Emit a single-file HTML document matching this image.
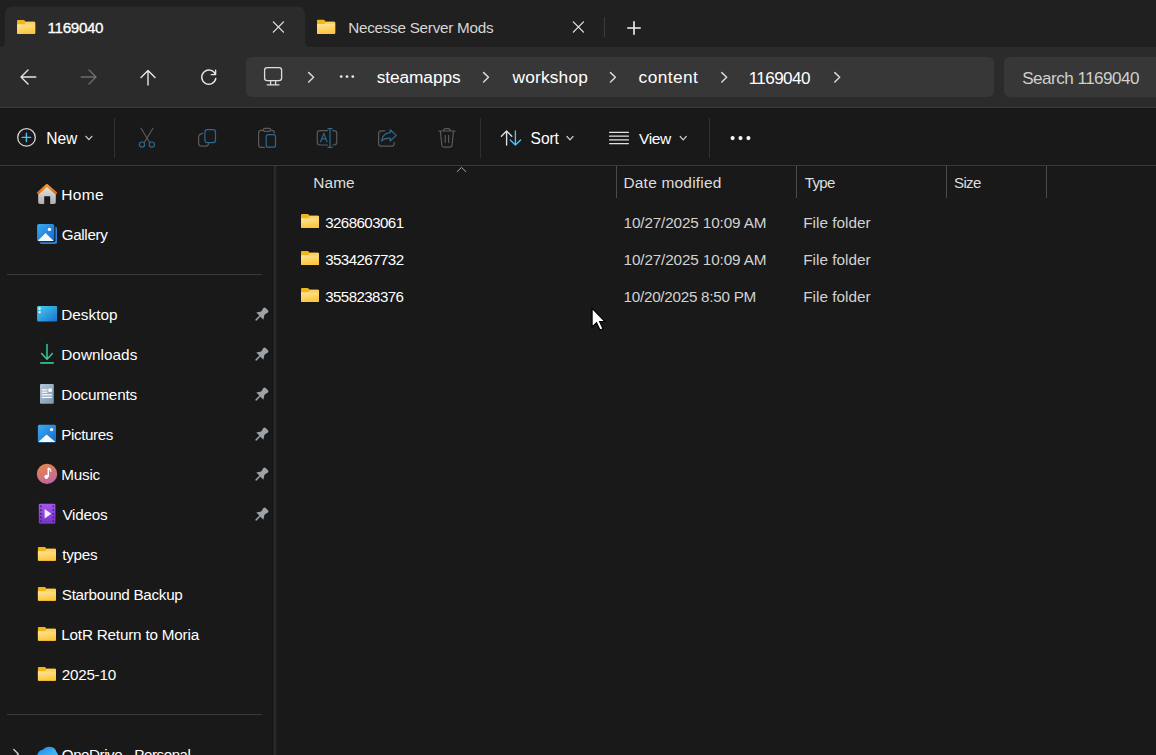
<!DOCTYPE html><html><head><meta charset="utf-8"><style>
html,body{margin:0;padding:0;width:1156px;height:755px;overflow:hidden;background:#191919}
body{position:relative;font-family:"Liberation Sans",sans-serif}
.t{position:absolute;white-space:nowrap;line-height:1}
svg{overflow:visible}
</style></head><body>
<div style="position:absolute;left:0;top:0;width:1156px;height:47px;background:#202020"></div>
<div style="position:absolute;left:0;top:47px;width:1156px;height:60px;background:#2b2b2b"></div>
<div style="position:absolute;left:0;top:107px;width:1156px;height:1px;background:#3b3b3b"></div>
<div style="position:absolute;left:0;top:108px;width:1156px;height:647px;background:#191919"></div>
<div style="position:absolute;left:0;top:108px;width:1156px;height:1px;background:#161616"></div>
<div style="position:absolute;left:0;top:164px;width:1156px;height:1px;background:#161616"></div>
<div style="position:absolute;left:0;top:165px;width:1156px;height:1px;background:#3b3b3b"></div>
<div style="position:absolute;left:0;top:166px;width:1156px;height:1px;background:#161616"></div>
<svg style="position:absolute;left:0;top:0" width="320" height="47" viewBox="0 0 320 47">
<path d="M0 47 Q5 47 5 42 L5 14.6 Q5 6.6 13 6.6 L297 6.6 Q305 6.6 305 14.6 L305 42 Q305 47 310 47 Z" fill="#2b2b2b"/></svg>
<div style="position:absolute;left:246px;top:57px;width:748px;height:40px;border-radius:6px;background:#373737"></div>
<div style="position:absolute;left:1004px;top:57px;width:200px;height:40px;border-radius:6px 6px 7px 7px;background:#373737;border-bottom:1px solid #313131"></div>
<div style="position:absolute;left:272px;top:166px;width:6px;height:589px;background:linear-gradient(90deg,#141414 0,#141414 1px,#1f1f1f 1px,#1f1f1f 2px,#2c2c2c 2px,#2c2c2c 3px,#252525 3px,#252525 4px,#1f1f1f 4px,#1f1f1f 5px,#1b1b1b 5px)"></div>
<div style="position:absolute;left:7px;top:274px;width:255px;height:1px;background:#3a3a3a"></div>
<div style="position:absolute;left:7px;top:714px;width:255px;height:1px;background:#3a3a3a"></div>
<div class="t" style="left:47.56px;top:20px;font-size:15.20px;letter-spacing:-0.332px;color:#ffffff;-webkit-text-stroke:0.3px #ffffff;">1169040</div>
<div class="t" style="left:348.18px;top:20px;font-size:15.25px;letter-spacing:-0.257px;color:#d6d6d6;">Necesse Server Mods</div>
<div class="t" style="left:376.68px;top:69px;font-size:17.30px;letter-spacing:-0.072px;color:#ffffff;">steamapps</div>
<div class="t" style="left:512.50px;top:69px;font-size:17.30px;letter-spacing:0.193px;color:#ffffff;">workshop</div>
<div class="t" style="left:638.61px;top:69px;font-size:17.30px;letter-spacing:0.422px;color:#ffffff;">content</div>
<div class="t" style="left:748.72px;top:70px;font-size:17.10px;letter-spacing:-0.590px;color:#ffffff;">1169040</div>
<div class="t" style="left:1022.23px;top:70px;font-size:17.10px;letter-spacing:-0.528px;color:#cfcfcf;">Search 1169040</div>
<div class="t" style="left:46.35px;top:131px;font-size:15.60px;letter-spacing:-0.115px;color:#ffffff;">New</div>
<div class="t" style="left:530.60px;top:131px;font-size:15.60px;letter-spacing:-0.089px;color:#ffffff;">Sort</div>
<div class="t" style="left:639.12px;top:131px;font-size:15.50px;letter-spacing:-0.449px;color:#ffffff;">View</div>
<div class="t" style="left:313.27px;top:175px;font-size:15.40px;letter-spacing:0.095px;color:#dedede;">Name</div>
<div class="t" style="left:623.46px;top:175px;font-size:15.45px;letter-spacing:0.218px;color:#dedede;">Date modified</div>
<div class="t" style="left:804.70px;top:175px;font-size:15.10px;letter-spacing:-0.670px;color:#dedede;">Type</div>
<div class="t" style="left:954.02px;top:175px;font-size:15.10px;letter-spacing:-0.670px;color:#dedede;">Size</div>
<div class="t" style="left:325.20px;top:215px;font-size:15.10px;letter-spacing:-0.564px;color:#ffffff;">3268603061</div>
<div class="t" style="left:623.55px;top:215px;font-size:15.30px;letter-spacing:-0.142px;color:#d2d2d2;">10/27/2025 10:09 AM</div>
<div class="t" style="left:803.17px;top:215px;font-size:15.35px;letter-spacing:0.017px;color:#d2d2d2;">File folder</div>
<div class="t" style="left:325.19px;top:252px;font-size:15.15px;letter-spacing:-0.586px;color:#ffffff;">3534267732</div>
<div class="t" style="left:623.55px;top:252px;font-size:15.30px;letter-spacing:-0.142px;color:#d2d2d2;">10/27/2025 10:09 AM</div>
<div class="t" style="left:803.17px;top:252px;font-size:15.35px;letter-spacing:0.017px;color:#d2d2d2;">File folder</div>
<div class="t" style="left:325.20px;top:289px;font-size:15.10px;letter-spacing:-0.572px;color:#ffffff;">3558238376</div>
<div class="t" style="left:623.56px;top:289px;font-size:15.25px;letter-spacing:-0.274px;color:#d2d2d2;">10/20/2025 8:50 PM</div>
<div class="t" style="left:803.17px;top:289px;font-size:15.35px;letter-spacing:0.017px;color:#d2d2d2;">File folder</div>
<div class="t" style="left:61.26px;top:187px;font-size:15.50px;letter-spacing:0.377px;color:#ffffff;">Home</div>
<div class="t" style="left:61.74px;top:227px;font-size:15.20px;letter-spacing:-0.337px;color:#ffffff;">Gallery</div>
<div class="t" style="left:61.27px;top:307px;font-size:15.35px;letter-spacing:-0.019px;color:#ffffff;">Desktop</div>
<div class="t" style="left:61.27px;top:347px;font-size:15.35px;letter-spacing:0.020px;color:#ffffff;">Downloads</div>
<div class="t" style="left:61.28px;top:387px;font-size:15.30px;letter-spacing:-0.170px;color:#ffffff;">Documents</div>
<div class="t" style="left:61.29px;top:427px;font-size:15.15px;letter-spacing:-0.364px;color:#ffffff;">Pictures</div>
<div class="t" style="left:61.28px;top:467px;font-size:15.25px;letter-spacing:-0.225px;color:#ffffff;">Music</div>
<div class="t" style="left:62.42px;top:507px;font-size:15.25px;letter-spacing:-0.230px;color:#ffffff;">Videos</div>
<div class="t" style="left:62.27px;top:547px;font-size:15.25px;letter-spacing:-0.271px;color:#ffffff;">types</div>
<div class="t" style="left:61.81px;top:587px;font-size:15.25px;letter-spacing:-0.296px;color:#ffffff;">Starbound Backup</div>
<div class="t" style="left:61.28px;top:627px;font-size:15.25px;letter-spacing:-0.195px;color:#ffffff;">LotR Return to Moria</div>
<div class="t" style="left:61.74px;top:667px;font-size:15.25px;letter-spacing:-0.262px;color:#ffffff;">2025-10</div>
<div class="t" style="left:61.82px;top:747px;font-size:15.15px;letter-spacing:-0.445px;color:#ffffff;">OneDrive - Personal</div>
<svg style="position:absolute;left:0;top:0" width="1156" height="755" viewBox="0 0 1156 755"><defs>
<linearGradient id="fg" x1="0" y1="0" x2="0.3" y2="1"><stop offset="0" stop-color="#ffe699"/><stop offset="1" stop-color="#fcc63e"/></linearGradient>
<linearGradient id="roof" x1="0" y1="0" x2="0" y2="1"><stop offset="0" stop-color="#f59a2a"/><stop offset="1" stop-color="#de6a0c"/></linearGradient>
<linearGradient id="house" x1="0" y1="0" x2="0" y2="1"><stop offset="0" stop-color="#e6e6e6"/><stop offset="1" stop-color="#aeaeae"/></linearGradient>
<linearGradient id="gal" x1="0" y1="0" x2="1" y2="1"><stop offset="0" stop-color="#3eaaf2"/><stop offset="1" stop-color="#136bd0"/></linearGradient>
<linearGradient id="desk" x1="0" y1="0" x2="1" y2="1"><stop offset="0" stop-color="#4ad0ea"/><stop offset="1" stop-color="#1670d4"/></linearGradient>
<linearGradient id="doc" x1="0" y1="0" x2="1" y2="1"><stop offset="0" stop-color="#b4c6d8"/><stop offset="1" stop-color="#7d96ae"/></linearGradient>
<linearGradient id="mus" x1="0" y1="0" x2="0.4" y2="1"><stop offset="0" stop-color="#ec8a3e"/><stop offset="1" stop-color="#c2679e"/></linearGradient>
<linearGradient id="vid" x1="0" y1="0" x2="0" y2="1"><stop offset="0" stop-color="#a458ec"/><stop offset="1" stop-color="#7434c6"/></linearGradient>
<linearGradient id="od" x1="0" y1="0" x2="1" y2="1"><stop offset="0" stop-color="#1f7fe0"/><stop offset="0.5" stop-color="#38a8f2"/><stop offset="1" stop-color="#52c0f4"/></linearGradient>
</defs><path d="M17.0,20.91428571428571 Q17.0,19.9 18.011111111111113,19.9 L23.673333333333332,19.9 Q24.28,19.9 24.684444444444445,20.407142857142855 L25.695555555555554,21.725714285714282 L34.18888888888889,21.725714285714282 Q35.2,21.725714285714282 35.2,22.74 L35.2,33.08571428571428 Q35.2,34.099999999999994 34.18888888888889,34.099999999999994 L18.011111111111113,34.099999999999994 Q17.0,34.099999999999994 17.0,33.08571428571428 Z" fill="#f1b51c"/><path d="M25.695555555555554,21.725714285714282 L34.18888888888889,21.725714285714282 Q35.2,21.725714285714282 35.2,22.74 L35.2,24.159999999999997 L24.482222222222223,24.159999999999997 Z" fill="#fbd166"/><path d="M17.0,24.159999999999997 L35.2,24.159999999999997 L35.2,33.08571428571428 Q35.2,34.099999999999994 34.18888888888889,34.099999999999994 L18.011111111111113,34.099999999999994 Q17.0,34.099999999999994 17.0,33.08571428571428 Z" fill="url(#fg)"/><path d="M317.0,20.821428571428573 Q317.0,19.8 318.0111111111111,19.8 L323.67333333333335,19.8 Q324.28,19.8 324.68444444444447,20.310714285714287 L325.69555555555553,21.63857142857143 L334.18888888888887,21.63857142857143 Q335.2,21.63857142857143 335.2,22.66 L335.2,33.07857142857143 Q335.2,34.1 334.18888888888887,34.1 L318.0111111111111,34.1 Q317.0,34.1 317.0,33.07857142857143 Z" fill="#f1b51c"/><path d="M325.69555555555553,21.63857142857143 L334.18888888888887,21.63857142857143 Q335.2,21.63857142857143 335.2,22.66 L335.2,24.090000000000003 L324.4822222222222,24.090000000000003 Z" fill="#fbd166"/><path d="M317.0,24.090000000000003 L335.2,24.090000000000003 L335.2,33.07857142857143 Q335.2,34.1 334.18888888888887,34.1 L318.0111111111111,34.1 Q317.0,34.1 317.0,33.07857142857143 Z" fill="url(#fg)"/><path d="M273.29999999999995,21.9 L283.5,32.1 M283.5,21.9 L273.29999999999995,32.1" stroke="#e4e4e4" stroke-width="1.3" stroke-linecap="round"/><path d="M573.3,21.9 L583.5,32.1 M583.5,21.9 L573.3,32.1" stroke="#e4e4e4" stroke-width="1.3" stroke-linecap="round"/><rect x="604" y="17" width="1" height="20" fill="#3b3b3b"/><path d="M634,21.8 V34.2 M627.8,28 H640.2" stroke="#f2f2f2" stroke-width="1.6" stroke-linecap="round"/><path d="M21,77 H35.8 M28,70 L21,77 L28,84" fill="none" stroke="#e6e6e6" stroke-width="1.4" stroke-linecap="round" stroke-linejoin="round"/><path d="M96,77 H81.2 M89,70 L96,77 L89,84" fill="none" stroke="#6e6e6e" stroke-width="1.4" stroke-linecap="round" stroke-linejoin="round"/><path d="M148,85 V70.6 M141,77.6 L148,70.6 L155,77.6" fill="none" stroke="#e6e6e6" stroke-width="1.4" stroke-linecap="round" stroke-linejoin="round"/><path d="M215.3,74.2 A7.1,7.1 0 1 0 215.8,78.5" fill="none" stroke="#e6e6e6" stroke-width="1.4" stroke-linecap="round"/><path d="M215.6,70.2 V74.6 H211.2" fill="none" stroke="#e6e6e6" stroke-width="1.4" stroke-linecap="round" stroke-linejoin="round"/><rect x="264.6" y="67.6" width="17" height="13" rx="2.6" fill="none" stroke="#dedede" stroke-width="1.3"/><path d="M270.6,80.8 V84.6 M275.6,80.8 V84.6 M267.2,84.8 H279" stroke="#dedede" stroke-width="1.3" stroke-linecap="round"/><path d="M308.7,72.6 L313.59999999999997,77.3 L308.7,82.0" fill="none" stroke="#d8d8d8" stroke-width="1.5" stroke-linecap="round" stroke-linejoin="round"/><path d="M483.6,72.6 L488.5,77.3 L483.6,82.0" fill="none" stroke="#d8d8d8" stroke-width="1.5" stroke-linecap="round" stroke-linejoin="round"/><path d="M610.5,72.6 L615.4000000000001,77.3 L610.5,82.0" fill="none" stroke="#d8d8d8" stroke-width="1.5" stroke-linecap="round" stroke-linejoin="round"/><path d="M721.8,72.6 L726.7,77.3 L721.8,82.0" fill="none" stroke="#d8d8d8" stroke-width="1.5" stroke-linecap="round" stroke-linejoin="round"/><path d="M834.8,72.6 L839.7,77.3 L834.8,82.0" fill="none" stroke="#d8d8d8" stroke-width="1.5" stroke-linecap="round" stroke-linejoin="round"/><circle cx="341.2" cy="76.6" r="1.4" fill="#e4e4e4"/><circle cx="347" cy="76.6" r="1.4" fill="#e4e4e4"/><circle cx="352.8" cy="76.6" r="1.4" fill="#e4e4e4"/><circle cx="26.5" cy="137.4" r="8.8" fill="none" stroke="#d6d6d6" stroke-width="1.3"/><path d="M26.4,133.2 V141.6 M22.2,137.4 H30.6" stroke="#4cc2ff" stroke-width="1.4" stroke-linecap="round"/><path d="M85.9,136.3 L88.9,139.70000000000002 L91.9,136.3" fill="none" stroke="#cfcfcf" stroke-width="1.2" stroke-linecap="round" stroke-linejoin="round"/><rect x="114" y="118" width="1" height="40" fill="#303030"/><rect x="480" y="118" width="1" height="40" fill="#303030"/><rect x="709" y="118" width="1" height="40" fill="#303030"/><path d="M141,128.3 L149.4,142 M153,128.3 L144.5,142" stroke="#5a5a5a" stroke-width="1.2" stroke-linecap="round"/><circle cx="142" cy="144.6" r="2.6" fill="none" stroke="#2c6890" stroke-width="1.2"/><circle cx="151.9" cy="144.6" r="2.6" fill="none" stroke="#2c6890" stroke-width="1.2"/><rect x="204.9" y="129.6" width="10.6" height="13" rx="2.4" fill="none" stroke="#2c6890" stroke-width="1.2"/><path d="M202.8,133.3 Q198.6,133.8 198.6,137.8 V143.2 Q198.6,146.2 201.6,146.2 H205.6 Q208.2,146.2 208.7,143.6" fill="none" stroke="#5a5a5a" stroke-width="1.2" stroke-linecap="round"/><path d="M263,130.3 H261 Q258.6,130.3 258.6,132.7 V145 Q258.6,147.3 261,147.3 H264.6" fill="none" stroke="#5a5a5a" stroke-width="1.2" stroke-linecap="round"/><path d="M271.6,130.3 Q274.4,130.3 274.4,133" fill="none" stroke="#5a5a5a" stroke-width="1.2" stroke-linecap="round"/><rect x="263.4" y="128.4" width="7.2" height="3" rx="1.4" fill="none" stroke="#5a5a5a" stroke-width="1.2"/><rect x="266.2" y="134.6" width="9.3" height="12.6" rx="2" fill="none" stroke="#2c6890" stroke-width="1.2"/><path d="M327.6,130.6 H320 Q317.3,130.6 317.3,133.3 V142.3 Q317.3,145 320,145 H327.6 M332.6,130.6 H334 Q336.7,130.6 336.7,133.3 V142.3 Q336.7,145 334,145 H332.6" fill="none" stroke="#5a5a5a" stroke-width="1.2" stroke-linecap="round"/><path d="M320.6,141.8 L323.8,133.4 L327,141.8 M321.8,138.8 H325.8" fill="none" stroke="#2c6890" stroke-width="1.2" stroke-linecap="round" stroke-linejoin="round"/><path d="M330,128.6 V147.4 M328,128.6 H332 M328,147.4 H332" stroke="#2c6890" stroke-width="1.2" stroke-linecap="round"/><path d="M384.8,130.8 H381.4 Q378.6,130.8 378.6,133.6 V143.4 Q378.6,146.2 381.4,146.2 H391.4 Q394.2,146.2 394.2,143.4 V142.4" fill="none" stroke="#5a5a5a" stroke-width="1.2" stroke-linecap="round"/><path d="M390.2,129.8 L396.2,135.4 L390.2,141 V138.1 Q384.2,137.9 381.6,141.2 Q382.4,133.4 390.2,132.7 Z" fill="none" stroke="#2c6890" stroke-width="1.25" stroke-linejoin="round"/><path d="M438.6,131 H455.2 M443.6,131 Q443.6,128.6 446,128.6 H448 Q450.3,128.6 450.3,131 M440.4,131.4 L441.8,145 Q442,147.2 444.3,147.2 H449.6 Q451.9,147.2 452.1,145 L453.4,131.4 M445.2,135.4 V142.4 M448.6,135.4 V142.4" fill="none" stroke="#5a5a5a" stroke-width="1.2" stroke-linecap="round" stroke-linejoin="round"/><path d="M506.6,145 V131 M501.4,136.2 L506.6,131 L511.8,136.2" fill="none" stroke="#e2e2e2" stroke-width="1.35" stroke-linecap="round" stroke-linejoin="round"/><path d="M515.4,131 V145.1 M510.2,139.9 L515.4,145.1 L520.6,139.9" fill="none" stroke="#4cc2ff" stroke-width="1.35" stroke-linecap="round" stroke-linejoin="round"/><path d="M567.0,136.5 L570.0,139.9 L573.0,136.5" fill="none" stroke="#cfcfcf" stroke-width="1.2" stroke-linecap="round" stroke-linejoin="round"/><rect x="609" y="131.79999999999998" width="20" height="1.3" rx="0.6" fill="#e2e2e2"/><rect x="609" y="135.5" width="20" height="1.3" rx="0.6" fill="#e2e2e2"/><rect x="609" y="139.2" width="20" height="1.3" rx="0.6" fill="#e2e2e2"/><rect x="609" y="142.9" width="20" height="1.3" rx="0.6" fill="#e2e2e2"/><path d="M680.2,136.5 L683.2,139.9 L686.2,136.5" fill="none" stroke="#cfcfcf" stroke-width="1.2" stroke-linecap="round" stroke-linejoin="round"/><circle cx="732.6" cy="138.1" r="2.05" fill="#f6f6f6"/><circle cx="740.5" cy="138.1" r="2.05" fill="#f6f6f6"/><circle cx="748.4" cy="138.1" r="2.05" fill="#f6f6f6"/><path d="M457.2,171.6 L461.5,167.4 L465.8,171.6" fill="none" stroke="#a8a8a8" stroke-width="1" stroke-linecap="round" stroke-linejoin="round"/><rect x="616" y="166" width="1" height="32" fill="#4a4a4a"/><rect x="796" y="166" width="1" height="32" fill="#4a4a4a"/><rect x="946" y="166" width="1" height="32" fill="#4a4a4a"/><rect x="1046" y="166" width="1" height="32" fill="#4a4a4a"/><path d="M301.0,214.90714285714287 Q301.0,213.9 302.0,213.9 L307.6,213.9 Q308.2,213.9 308.6,214.40357142857144 L309.6,215.71285714285716 L318.0,215.71285714285716 Q319.0,215.71285714285716 319.0,216.72 L319.0,226.99285714285713 Q319.0,228.0 318.0,228.0 L302.0,228.0 Q301.0,228.0 301.0,226.99285714285713 Z" fill="#f1b51c"/><path d="M309.6,215.71285714285716 L318.0,215.71285714285716 Q319.0,215.71285714285716 319.0,216.72 L319.0,218.13 L308.4,218.13 Z" fill="#fbd166"/><path d="M301.0,218.13 L319.0,218.13 L319.0,226.99285714285713 Q319.0,228.0 318.0,228.0 L302.0,228.0 Q301.0,228.0 301.0,226.99285714285713 Z" fill="url(#fg)"/><path d="M301.0,251.90714285714287 Q301.0,250.9 302.0,250.9 L307.6,250.9 Q308.2,250.9 308.6,251.40357142857144 L309.6,252.71285714285716 L318.0,252.71285714285716 Q319.0,252.71285714285716 319.0,253.72 L319.0,263.99285714285713 Q319.0,265.0 318.0,265.0 L302.0,265.0 Q301.0,265.0 301.0,263.99285714285713 Z" fill="#f1b51c"/><path d="M309.6,252.71285714285716 L318.0,252.71285714285716 Q319.0,252.71285714285716 319.0,253.72 L319.0,255.13 L308.4,255.13 Z" fill="#fbd166"/><path d="M301.0,255.13 L319.0,255.13 L319.0,263.99285714285713 Q319.0,265.0 318.0,265.0 L302.0,265.0 Q301.0,265.0 301.0,263.99285714285713 Z" fill="url(#fg)"/><path d="M301.0,288.90714285714284 Q301.0,287.9 302.0,287.9 L307.6,287.9 Q308.2,287.9 308.6,288.4035714285714 L309.6,289.7128571428571 L318.0,289.7128571428571 Q319.0,289.7128571428571 319.0,290.71999999999997 L319.0,300.99285714285713 Q319.0,302.0 318.0,302.0 L302.0,302.0 Q301.0,302.0 301.0,300.99285714285713 Z" fill="#f1b51c"/><path d="M309.6,289.7128571428571 L318.0,289.7128571428571 Q319.0,289.7128571428571 319.0,290.71999999999997 L319.0,292.13 L308.4,292.13 Z" fill="#fbd166"/><path d="M301.0,292.13 L319.0,292.13 L319.0,300.99285714285713 Q319.0,302.0 318.0,302.0 L302.0,302.0 Q301.0,302.0 301.0,300.99285714285713 Z" fill="url(#fg)"/><path d="M38.2,193.2 L47,185.6 L55.8,193.2 V202.2 Q55.8,204 54,204 H50.2 V196.3 H44.2 V204 H40 Q38.2,204 38.2,202.2 Z" fill="url(#house)"/><path d="M38.2,193 L46.9,185.2 L55.8,193" fill="none" stroke="url(#roof)" stroke-width="2.5" stroke-linecap="round" stroke-linejoin="round"/><rect x="39.6" y="226.6" width="17.4" height="17.4" rx="1.8" fill="#2a84e2"/><rect x="37.1" y="224" width="18.3" height="18.3" rx="2" fill="#151515"/><rect x="37.1" y="224" width="17.2" height="17.2" rx="1.8" fill="url(#gal)"/><path d="M37.6,240.9 L45.5,232.9 L53.8,240.9 Z" fill="#f4f8fc"/><circle cx="49.4" cy="229.4" r="1.7" fill="#ffffff"/><rect x="37.1" y="305.9" width="20" height="15.6" rx="1" fill="url(#desk)"/><rect x="38.6" y="307.6" width="2" height="2" fill="#ffffff"/><rect x="38.6" y="311.2" width="2" height="2" fill="#ffffff"/><path d="M47,344.4 V359.2 M41.6,353.6 L47,359.2 L52.4,353.6" fill="none" stroke="#36c894" stroke-width="1.5" stroke-linecap="round" stroke-linejoin="round"/><rect x="40.2" y="362.1" width="13.6" height="1.7" fill="#36c894"/><rect x="40" y="384" width="13.8" height="19.7" rx="1" fill="url(#doc)"/><rect x="41.8" y="389.2" width="5.6" height="1.2" fill="#fff"/><rect x="41.8" y="391.6" width="5.6" height="1.2" fill="#fff"/><rect x="48.4" y="388.6" width="3.4" height="3.2" fill="#fff"/><rect x="41.8" y="394.2" width="10" height="1.2" fill="#fff"/><rect x="41.8" y="396.8" width="10" height="1.2" fill="#fff"/><rect x="37.9" y="424.8" width="18.1" height="17.7" rx="1.5" fill="url(#gal)"/><path d="M38.4,442 L46.6,434.4 L55.4,442 Z" fill="#f4f8fc"/><circle cx="51.6" cy="429.6" r="1.7" fill="#fff"/><circle cx="47" cy="473.9" r="10.2" fill="url(#mus)"/><path d="M48.3,468.2 V476.6" stroke="#fff" stroke-width="1.5"/><circle cx="46.4" cy="476.8" r="2.1" fill="#fff"/><path d="M48.3,468.2 Q50.6,469 50.8,471.2" fill="none" stroke="#fff" stroke-width="1.3" stroke-linecap="round"/><rect x="38.8" y="503.8" width="16.6" height="19.9" rx="1.4" fill="url(#vid)"/><rect x="40.1" y="505.6" width="1.5" height="1.5" fill="#3c1a6a"/><rect x="52.6" y="505.6" width="1.5" height="1.5" fill="#3c1a6a"/><rect x="40.1" y="509.3" width="1.5" height="1.5" fill="#3c1a6a"/><rect x="52.6" y="509.3" width="1.5" height="1.5" fill="#3c1a6a"/><rect x="40.1" y="513.0" width="1.5" height="1.5" fill="#3c1a6a"/><rect x="52.6" y="513.0" width="1.5" height="1.5" fill="#3c1a6a"/><rect x="40.1" y="516.7" width="1.5" height="1.5" fill="#3c1a6a"/><rect x="52.6" y="516.7" width="1.5" height="1.5" fill="#3c1a6a"/><rect x="40.1" y="520.4" width="1.5" height="1.5" fill="#3c1a6a"/><rect x="52.6" y="520.4" width="1.5" height="1.5" fill="#3c1a6a"/><path d="M44.6,509 L51.4,513.7 L44.6,518.4 Z" fill="#f2eaff"/><g transform="translate(261.7,314.3) rotate(45)" fill="#9ba2a8"><path d="M-3.2,-5.6 Q-3.2,-7.2 -1.6,-7.2 L1.6,-7.2 Q3.2,-7.2 3.2,-5.6 L2.3,-1.6 L5,2.6 L-5,2.6 L-2.3,-1.6 Z"/><rect x="-0.75" y="2" width="1.5" height="6.6" rx="0.7"/></g><g transform="translate(261.7,354.3) rotate(45)" fill="#9ba2a8"><path d="M-3.2,-5.6 Q-3.2,-7.2 -1.6,-7.2 L1.6,-7.2 Q3.2,-7.2 3.2,-5.6 L2.3,-1.6 L5,2.6 L-5,2.6 L-2.3,-1.6 Z"/><rect x="-0.75" y="2" width="1.5" height="6.6" rx="0.7"/></g><g transform="translate(261.7,394.3) rotate(45)" fill="#9ba2a8"><path d="M-3.2,-5.6 Q-3.2,-7.2 -1.6,-7.2 L1.6,-7.2 Q3.2,-7.2 3.2,-5.6 L2.3,-1.6 L5,2.6 L-5,2.6 L-2.3,-1.6 Z"/><rect x="-0.75" y="2" width="1.5" height="6.6" rx="0.7"/></g><g transform="translate(261.7,434.3) rotate(45)" fill="#9ba2a8"><path d="M-3.2,-5.6 Q-3.2,-7.2 -1.6,-7.2 L1.6,-7.2 Q3.2,-7.2 3.2,-5.6 L2.3,-1.6 L5,2.6 L-5,2.6 L-2.3,-1.6 Z"/><rect x="-0.75" y="2" width="1.5" height="6.6" rx="0.7"/></g><g transform="translate(261.7,474.3) rotate(45)" fill="#9ba2a8"><path d="M-3.2,-5.6 Q-3.2,-7.2 -1.6,-7.2 L1.6,-7.2 Q3.2,-7.2 3.2,-5.6 L2.3,-1.6 L5,2.6 L-5,2.6 L-2.3,-1.6 Z"/><rect x="-0.75" y="2" width="1.5" height="6.6" rx="0.7"/></g><g transform="translate(261.7,514.3) rotate(45)" fill="#9ba2a8"><path d="M-3.2,-5.6 Q-3.2,-7.2 -1.6,-7.2 L1.6,-7.2 Q3.2,-7.2 3.2,-5.6 L2.3,-1.6 L5,2.6 L-5,2.6 L-2.3,-1.6 Z"/><rect x="-0.75" y="2" width="1.5" height="6.6" rx="0.7"/></g><path d="M37.9,547.9857142857143 Q37.9,547.0 38.90555555555555,547.0 L44.53666666666666,547.0 Q45.14,547.0 45.54222222222222,547.4928571428571 L46.547777777777775,548.7742857142857 L54.99444444444444,548.7742857142857 Q56.0,548.7742857142857 56.0,549.76 L56.0,559.8142857142857 Q56.0,560.8 54.99444444444444,560.8 L38.90555555555555,560.8 Q37.9,560.8 37.9,559.8142857142857 Z" fill="#f1b51c"/><path d="M46.547777777777775,548.7742857142857 L54.99444444444444,548.7742857142857 Q56.0,548.7742857142857 56.0,549.76 L56.0,551.14 L45.34111111111111,551.14 Z" fill="#fbd166"/><path d="M37.9,551.14 L56.0,551.14 L56.0,559.8142857142857 Q56.0,560.8 54.99444444444444,560.8 L38.90555555555555,560.8 Q37.9,560.8 37.9,559.8142857142857 Z" fill="url(#fg)"/><path d="M37.9,587.9857142857143 Q37.9,587.0 38.90555555555555,587.0 L44.53666666666666,587.0 Q45.14,587.0 45.54222222222222,587.4928571428571 L46.547777777777775,588.7742857142857 L54.99444444444444,588.7742857142857 Q56.0,588.7742857142857 56.0,589.76 L56.0,599.8142857142857 Q56.0,600.8 54.99444444444444,600.8 L38.90555555555555,600.8 Q37.9,600.8 37.9,599.8142857142857 Z" fill="#f1b51c"/><path d="M46.547777777777775,588.7742857142857 L54.99444444444444,588.7742857142857 Q56.0,588.7742857142857 56.0,589.76 L56.0,591.14 L45.34111111111111,591.14 Z" fill="#fbd166"/><path d="M37.9,591.14 L56.0,591.14 L56.0,599.8142857142857 Q56.0,600.8 54.99444444444444,600.8 L38.90555555555555,600.8 Q37.9,600.8 37.9,599.8142857142857 Z" fill="url(#fg)"/><path d="M37.9,627.9857142857143 Q37.9,627.0 38.90555555555555,627.0 L44.53666666666666,627.0 Q45.14,627.0 45.54222222222222,627.4928571428571 L46.547777777777775,628.7742857142857 L54.99444444444444,628.7742857142857 Q56.0,628.7742857142857 56.0,629.76 L56.0,639.8142857142857 Q56.0,640.8 54.99444444444444,640.8 L38.90555555555555,640.8 Q37.9,640.8 37.9,639.8142857142857 Z" fill="#f1b51c"/><path d="M46.547777777777775,628.7742857142857 L54.99444444444444,628.7742857142857 Q56.0,628.7742857142857 56.0,629.76 L56.0,631.14 L45.34111111111111,631.14 Z" fill="#fbd166"/><path d="M37.9,631.14 L56.0,631.14 L56.0,639.8142857142857 Q56.0,640.8 54.99444444444444,640.8 L38.90555555555555,640.8 Q37.9,640.8 37.9,639.8142857142857 Z" fill="url(#fg)"/><path d="M37.9,667.9857142857143 Q37.9,667.0 38.90555555555555,667.0 L44.53666666666666,667.0 Q45.14,667.0 45.54222222222222,667.4928571428571 L46.547777777777775,668.7742857142857 L54.99444444444444,668.7742857142857 Q56.0,668.7742857142857 56.0,669.76 L56.0,679.8142857142857 Q56.0,680.8 54.99444444444444,680.8 L38.90555555555555,680.8 Q37.9,680.8 37.9,679.8142857142857 Z" fill="#f1b51c"/><path d="M46.547777777777775,668.7742857142857 L54.99444444444444,668.7742857142857 Q56.0,668.7742857142857 56.0,669.76 L56.0,671.14 L45.34111111111111,671.14 Z" fill="#fbd166"/><path d="M37.9,671.14 L56.0,671.14 L56.0,679.8142857142857 Q56.0,680.8 54.99444444444444,680.8 L38.90555555555555,680.8 Q37.9,680.8 37.9,679.8142857142857 Z" fill="url(#fg)"/><path d="M13.8,749.6 L18.3,754.1 L13.8,758.6" fill="none" stroke="#cfcfcf" stroke-width="1.4" stroke-linecap="round" stroke-linejoin="round"/><path d="M37,758 Q37,750.8 42.6,749.8 Q46,746 51,747 Q55.4,747.6 56.4,752 Q58.6,754 58,758 Z" fill="url(#od)"/><path d="M592.1,308.3 V326.8 L596.5,322.6 L600.1,330 L603,328.7 L599.6,321.5 L605,321.5 Z" fill="#ffffff" stroke="#000" stroke-width="1.15" stroke-linejoin="miter"/></svg>
</body></html>
